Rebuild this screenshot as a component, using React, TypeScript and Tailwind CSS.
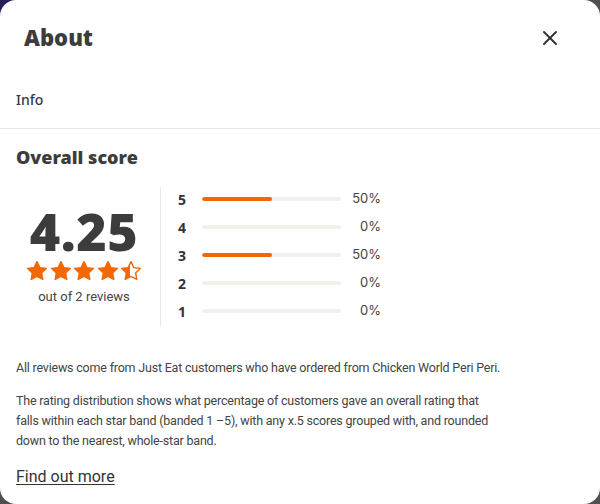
import React from 'react';
import { X } from 'lucide-react';

const rows = [
  { star: 5, pct: 50 },
  { star: 4, pct: 0 },
  { star: 3, pct: 50 },
  { star: 2, pct: 0 },
  { star: 1, pct: 0 },
];

const STAR = 'M12 1.8l3.1 6.5 7.1.9-5.2 4.9 1.3 7.1L12 17.8l-6.3 3.4 1.3-7.1L1.8 9.2l7.1-.9z';

const Star = ({ fill }: { fill: number }) => {
  const id = `sg${fill}`;
  return (
    <svg width="22" height="22" viewBox="0 0 24 24" className="shrink-0">
      <defs>
        <linearGradient id={id} x1="0" x2="1" y1="0" y2="0">
          <stop offset={`${fill}%`} stopColor="#f36805" />
          <stop offset={`${fill}%`} stopColor="#ffffff" />
        </linearGradient>
      </defs>
      <path d={STAR} fill={`url(#${id})`} stroke="#f36805" strokeWidth="1.6" strokeLinejoin="round" />
    </svg>
  );
};

export default function App() {
  return (
    <div className="w-full h-[504px] bg-[#4f4f4f] relative overflow-hidden">
      <div className="absolute top-0 left-0 w-6 h-6 bg-[#2a1d5c]" />
      <div className="relative h-full bg-white rounded-[16px] flex flex-col text-[#3c3c3c] font-['Noto_Sans',sans-serif]">
        {/* header */}
        <div className="h-[74px] flex items-center justify-between pl-6 pr-[38px]">
          <h1 className="text-[22px] leading-7 font-black">About</h1>
          <X size={24} strokeWidth={2} className="text-[#333] mt-[2px]" />
        </div>

        {/* tabs */}
        <div className="px-4 pt-[15px] pb-[18px] leading-5 border-b border-[#e8e8e8]">
          <span className="text-[14px] leading-5 font-medium text-[#2f3a44]">Info</span>
        </div>

        <div className="px-4 pt-[16px]">
          <h2 className="text-[18px] leading-6 font-black">Overall score</h2>

          <div className="mt-[18px] flex">
            <div className="w-[145px] pr-2 border-r border-[#e8e8e8] h-[139px] flex flex-col items-center justify-center">
              <div className="text-[52px] leading-[48px] font-black tracking-[0.5px]">4.25</div>
              <div className="flex gap-[1.5px] mt-[5px]">
                <Star fill={100} />
                <Star fill={100} />
                <Star fill={100} />
                <Star fill={100} />
                <Star fill={42} />
              </div>
              <div className="mt-[5px] text-[13px] leading-5 text-[#444] font-['Roboto',sans-serif]">out of 2 reviews</div>
            </div>

            <div className="pl-[17px] -mt-[2px] flex flex-col">
              {rows.map((r) => (
                <div key={r.star} className="h-[28px] flex items-center">
                  <span className="w-[24px] text-[14px] font-bold text-[#333]">{r.star}</span>
                  <div className="w-[139px] h-[4px] rounded-full bg-[#f3f0eb] overflow-hidden">
                    <div className="h-full rounded-full bg-[#f36805]" style={{ width: `${r.pct}%` }} />
                  </div>
                  <span className="w-[40px] text-right text-[13px] text-[#444] font-['Inter',sans-serif]">{r.pct}%</span>
                </div>
              ))}
            </div>
          </div>

          <div className="mt-[32px] w-[487px] text-[12.5px] tracking-[-0.2px] leading-5 text-[#444] font-['Roboto',sans-serif] space-y-[13px]">
            <p>All reviews come from Just Eat customers who have ordered from Chicken World Peri Peri.</p>
            <p>
              The rating distribution shows what percentage of customers gave an overall rating that falls within each
              star band (banded 1 –5), with any x.5 scores grouped with, and rounded down to the nearest, whole-star band.
            </p>
          </div>

          <a href="#" className="block mt-[16px] text-[16px] leading-5 underline underline-offset-2 text-[#333] font-['Roboto',sans-serif]">
            Find out more
          </a>
        </div>
      </div>
    </div>
  );
}
